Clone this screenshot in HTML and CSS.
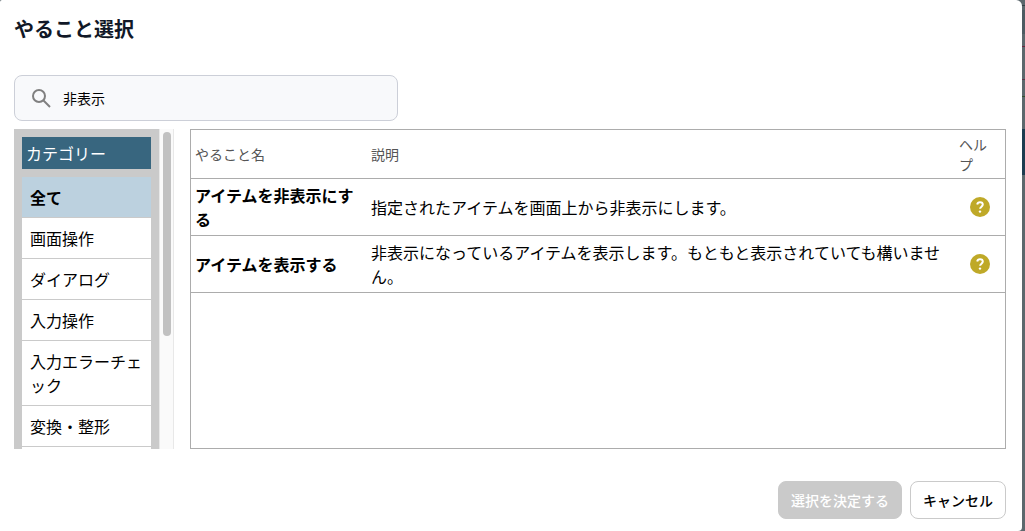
FILE: index.html
```html
<!DOCTYPE html>
<html lang="ja">
<head>
    <title>やること選択</title>
    <meta charset="utf-8">
    <meta name="viewport" content="width=device-width, initial-scale=1.0">
    <link rel="stylesheet" href="styles.css">
</head>
<body>
    <div class="dialog" role="dialog" aria-labelledby="dialog-title">
        <h1 class="title" id="dialog-title">やること選択</h1>

        <label class="search">
            <svg class="search-icon" viewBox="0 0 24 24" aria-hidden="true">
                <circle cx="10" cy="10" r="6"/>
                <path d="M14.500 14.500l6.500 6.500"/>
            </svg>
            <input type="text" class="search-input" value="非表示" aria-label="検索">
        </label>

        <div class="content">
            <div class="sidebar">
                <nav class="category-box">
                    <h2 class="category-title">カテゴリー</h2>
                    <ul class="category-list">
                        <li><button type="button" class="category active">全て</button></li>
                        <li><button type="button" class="category">画面操作</button></li>
                        <li><button type="button" class="category">ダイアログ</button></li>
                        <li><button type="button" class="category">入力操作</button></li>
                        <li><button type="button" class="category">入力エラーチェック</button></li>
                        <li><button type="button" class="category">変換・整形</button></li>
                    </ul>
                </nav>
                <div class="scrollbar"><div class="thumb"></div></div>
            </div>

            <div class="table-box">
                <table class="actions">
                    <thead>
                        <tr>
                            <th class="col-name">やること名</th>
                            <th>説明</th>
                            <th class="col-help">ヘルプ</th>
                        </tr>
                    </thead>
                    <tbody>
                        <tr>
                            <td class="name">アイテムを非表示にする</td>
                            <td>指定されたアイテムを画面上から非表示にします。</td>
                            <td class="help">
                                <button type="button" class="help-button" aria-label="ヘルプ">
                                    <svg viewBox="0 0 20 20">
                                        <circle cx="10" cy="10" r="10"/>
                                        <path class="mark" d="M7.200 7.500C7.500 5.900 8.600 5.200 10 5.200c1.600 0 2.800 1 2.800 2.400 0 2-2.700 2.200-2.700 4.200"/>
                                        <circle class="dot" cx="10" cy="14.600" r="1.200"/>
                                    </svg>
                                </button>
                            </td>
                        </tr>
                        <tr>
                            <td class="name">アイテムを表示する</td>
                            <td>非表示になっているアイテムを表示します。もともと表示されていても構いません。</td>
                            <td class="help">
                                <button type="button" class="help-button" aria-label="ヘルプ">
                                    <svg viewBox="0 0 20 20">
                                        <circle cx="10" cy="10" r="10"/>
                                        <path class="mark" d="M7.200 7.500C7.500 5.900 8.600 5.200 10 5.200c1.600 0 2.800 1 2.800 2.400 0 2-2.700 2.200-2.700 4.200"/>
                                        <circle class="dot" cx="10" cy="14.600" r="1.200"/>
                                    </svg>
                                </button>
                            </td>
                        </tr>
                    </tbody>
                </table>
            </div>
        </div>

        <div class="footer">
            <button type="button" class="btn btn-submit" disabled>選択を決定する</button>
            <button type="button" class="btn">キャンセル</button>
        </div>
    </div>
</body>
</html>
```

FILE: styles.css
```css
* {
    box-sizing: border-box;
}

body, h1, h2, ul {
    margin: 0;
    padding: 0;
}

/* Page dimmed behind the dialog */
body {
    height: 100vh;
    padding-right: 3px;
    overflow: hidden;
    font-family: "Noto Sans CJK JP", sans-serif;
    font-size: 16px;
    line-height: 24px;
    color: #000;
    background: linear-gradient(
        #5c686d 5px, #354248 5px, #354248 6px,
        #5c686d 6px, #5c686d 10px, #4d5b62 10px, #4d5b62 34px,
        #5c686d 34px, #5c686d 46px, #6b2640 46px, #6b2640 47px,
        #5c686d 47px, #5c686d 79px, #5d344a 79px, #5d344a 80px,
        #5c686d 80px, #5c686d 96px, #34502f 96px, #34502f 97px,
        #5c686d 97px, #5c686d 129px, #1d3c50 129px, #1d3c50 175px,
        #5c686d 175px);
}

button, input {
    font-family: inherit;
    color: inherit;
}

.dialog {
    display: flex;
    flex-direction: column;
    height: 100%;
    padding: 14px 16px 12px 14px;
    background-color: #fff;
    border-radius: 2px 6px 4px 0;
}

.title {
    font-size: 20px;
    line-height: 30px;
    font-weight: 700;
    color: #111827;
}

.search {
    display: flex;
    align-items: center;
    gap: 10px;
    width: 384px;
    max-width: 100%;
    height: 46px;
    margin: 31px 0 8px;
    padding: 0 16px 0 14px;
    background-color: #f8f9fb;
    border: 1px solid #cccfd8;
    border-radius: 8px;
}

.search-icon {
    width: 24px;
    height: 24px;
    fill: none;
    stroke: #808080;
    stroke-width: 2;
}

.search-input {
    flex: 1;
    min-width: 0;
    padding: 0;
    font-size: 14px;
    line-height: 20px;
    background: none;
    border: none;
    outline: none;
}

.content {
    display: flex;
    gap: 16px;
    flex: 1;
    min-height: 0;
}

.sidebar {
    display: flex;
    width: 160px;
    flex-shrink: 0;
}

.category-box {
    flex: 1;
    padding: 8px;
    overflow-y: auto;
    scrollbar-width: none;
    background-color: #cacaca;
}

.category-title {
    padding: 4px;
    margin-bottom: 8px;
    font-size: 16px;
    line-height: 24px;
    font-weight: 400;
    color: #fff;
    background-color: #38667f;
}

.category-list {
    padding-bottom: 40px;
    list-style: none;
    background-color: #fff;
}

.category {
    display: block;
    width: 100%;
    padding: 8px;
    font-size: 16px;
    line-height: 24px;
    text-align: left;
    background-color: #fff;
    border: none;
    border-bottom: 1px solid #cacaca;
    cursor: pointer;
}

.category.active {
    font-weight: 700;
    background-color: #bcd1df;
}

.scrollbar {
    width: 15px;
    padding: 3px;
    background-color: #fafafa;
    border-left: 1px solid #e8e8e8;
    border-right: 1px solid #e8e8e8;
}

.thumb {
    width: 8px;
    height: 65%;
    background-color: #c1c1c1;
    border-radius: 4px;
}

.table-box {
    flex: 1;
    overflow-y: auto;
    border: 1px solid #acacac;
}

.actions {
    width: 100%;
    table-layout: fixed;
    border-collapse: separate;
    border-spacing: 0;
}

.actions th,
.actions td {
    padding: 4px;
    text-align: left;
    border-bottom: 1px solid #acacac;
}

.actions th {
    height: 49px;
    font-size: 14px;
    line-height: 20px;
    font-weight: 400;
    color: #555;
}

.actions .col-name {
    width: 176px;
}

/* narrow enough for the label to wrap */
.actions .col-help {
    width: 50px;
    padding-right: 8px;
}

.actions .name {
    font-weight: 700;
}

.help-button {
    display: block;
    width: 20px;
    height: 20px;
    margin: 0 auto;
    padding: 0;
    background: none;
    border: none;
    cursor: pointer;
}

.help-button svg {
    display: block;
    fill: #bfa928;
}

.help-button .mark {
    fill: none;
    stroke: #fff;
    stroke-width: 2;
}

.help-button .dot {
    fill: #fff;
}

.footer {
    display: flex;
    justify-content: flex-end;
    gap: 8px;
    margin-top: 32px;
}

.btn {
    height: 38px;
    padding: 0 12px;
    font-size: 14px;
    line-height: 20px;
    font-weight: 500;
    background-color: #fff;
    border: 1px solid #cacaca;
    border-radius: 8px;
    cursor: pointer;
}

.btn-submit {
    color: #fff;
    background-color: #cacaca;
    cursor: default;
}
```
